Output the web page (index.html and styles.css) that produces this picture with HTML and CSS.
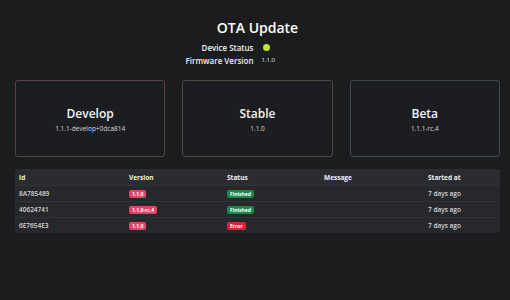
FILE: index.html
```html
<!DOCTYPE html>
<html lang="en">
<head>
    <meta charset="UTF-8">
    <meta name="viewport" content="width=device-width, initial-scale=1.0">
    <title>OTA Update</title>
    <link rel="stylesheet" href="styles.css">
</head>
<body>

<div class="page">
    <h1 class="title">OTA Update</h1>

    <div class="device">
        <div class="label">Device Status</div>
        <div class="value"><span class="dot"></span></div>
        <div class="label">Firmware Version</div>
        <div class="value small">1.1.0</div>
    </div>

    <div class="channels">
        <div class="channel develop">
            <div class="channel-name">Develop</div>
            <div class="channel-version">1.1.1-develop+0dca814</div>
        </div>
        <div class="channel stable">
            <div class="channel-name">Stable</div>
            <div class="channel-version">1.1.0</div>
        </div>
        <div class="channel beta">
            <div class="channel-name">Beta</div>
            <div class="channel-version">1.1.1-rc.4</div>
        </div>
    </div>

    <table class="updates">
        <thead>
            <tr>
                <th class="c-id">Id</th>
                <th class="c-version">Version</th>
                <th class="c-status">Status</th>
                <th class="c-message">Message</th>
                <th>Started at</th>
            </tr>
        </thead>
        <tbody>
            <tr>
                <td>8A785489</td>
                <td><span class="badge pink">1.1.0</span></td>
                <td><span class="badge green">Finished</span></td>
                <td></td>
                <td>7 days ago</td>
            </tr>
            <tr>
                <td>40624741</td>
                <td><span class="badge pink">1.1.0-rc.4</span></td>
                <td><span class="badge green">Finished</span></td>
                <td></td>
                <td>7 days ago</td>
            </tr>
            <tr>
                <td>6E7654E3</td>
                <td><span class="badge pink">1.1.0</span></td>
                <td><span class="badge red">Error</span></td>
                <td></td>
                <td>7 days ago</td>
            </tr>
        </tbody>
    </table>
</div>

</body>
</html>
```

FILE: styles.css
```css
body {
    margin: 0;
    background: #1b1c1e;
    color: #e8e8ea;
    font-family: "Open Sans", "DejaVu Sans", sans-serif;
}
.page {
    padding: 0 10px 0 15px;
}
.title {
    margin: 0;
    padding-top: 18px;
    height: 20px;
    line-height: 20px;
    font-size: 14px;
    font-weight: 600;
    text-align: center;
    color: #ffffff;
}
.device {
    display: grid;
    grid-template-columns: 1fr 1fr;
    column-gap: 8px;
    margin-top: 3px;
}
.label {
    text-align: right;
    font-size: 8px;
    font-weight: 600;
    line-height: 13px;
    color: #f0f0f0;
}
.value {
    display: flex;
    align-items: center;
    line-height: 13px;
}
.small {
    font-size: 6px;
}
.dot {
    display: inline-block;
    width: 7px;
    height: 7px;
    margin-left: 1px;
    border-radius: 50%;
    background: #bde334;
}
.channels {
    display: grid;
    grid-template-columns: repeat(3, 1fr);
    gap: 17px;
    margin-top: 13px;
}
.channel {
    height: 75px;
    border: 1px solid #44474e;
    border-radius: 3px;
    background: #1c1d20;
    display: flex;
    flex-direction: column;
    align-items: center;
    justify-content: center;
}
.channel.develop {
    border-color: #5b4343;
}
.channel.stable {
    border-color: #4a4b41;
}
.channel-name {
    font-size: 12px;
    font-weight: 600;
    line-height: 16px;
    color: #f4f4f4;
    margin-top: 2px;
}
.channel-version {
    font-size: 6.5px;
    line-height: 11px;
    color: #d8d8d8;
    margin-top: 1px;
}
.updates {
    width: 100%;
    margin-top: 12px;
    table-layout: fixed;
    border-collapse: collapse;
    background: #26282c;
    border-radius: 3px;
    overflow: hidden;
    font-size: 6.5px;
    font-weight: 600;
    color: #d6d6d8;
}
.updates th {
    text-align: left;
    font-weight: 700;
    color: #f2f2f2;
    height: 16px;
    padding: 0 4px;
    background: #2a2c30;
}
.updates td {
    height: 15px;
    padding: 0 4px;
    border-top: 1px solid #303237;
}
.c-id { width: 102px; }
.c-version { width: 90px; }
.c-status { width: 89px; }
.c-message { width: 96px; }
.badge {
    display: inline-block;
    padding: 0 3px;
    border-radius: 2px;
    font-size: 5px;
    font-weight: 700;
    line-height: 8px;
    color: #ffffff;
}
.pink {
    background: #e2436a;
}
.green {
    background: #198a4b;
}
.red {
    background: #d8243b;
}
```
